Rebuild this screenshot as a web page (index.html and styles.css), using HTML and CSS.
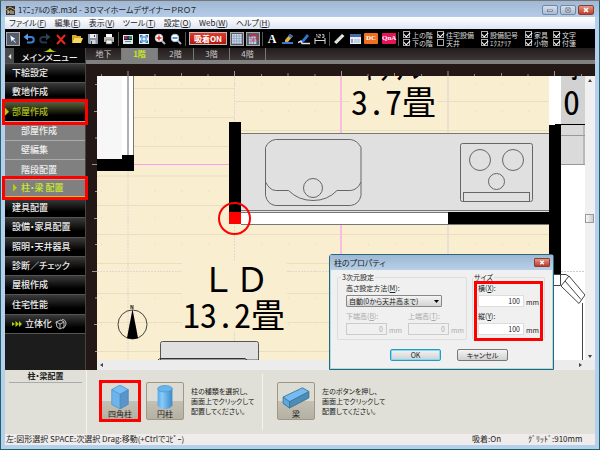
FILE: index.html
```html
<!DOCTYPE html>
<html lang="ja">
<head>
<meta charset="utf-8">
<title>1ﾏﾆｭｱﾙの家.m3d - ３ＤマイホームデザイナーＰＲＯ７</title>
<link rel="stylesheet" href="styles.css">
</head>
<body>
<div class="window">
  <header class="titlebar">
    <svg class="app-icon" viewBox="0 0 9 9"><rect width="9" height="9" fill="#3c3426"/><path d="M0 4l4-3 5 3" stroke="#b8a878" fill="none"/><path d="M1 5h2v2H1M4 5h2M4 7h2M7 5v3" stroke="#e8dcc0" fill="none"/></svg>
    <h1>1ﾏﾆｭｱﾙの家.m3d - ３ＤマイホームデザイナーＰＲＯ７</h1>
    <div class="win-buttons">
      <button aria-label="最小化"><svg viewBox="0 0 16 10"><rect x="5" y="5" width="6" height="2" fill="#fff" stroke="#556" stroke-width=".8"/></svg></button>
      <button aria-label="最大化"><svg viewBox="0 0 16 10"><rect x="5.500" y="2.500" width="5" height="5" fill="#fff" stroke="#556"/><rect x="7" y="4" width="2" height="2" fill="#556"/></svg></button>
      <button class="close" aria-label="閉じる"><svg viewBox="0 0 16 10"><path d="M5.500 2.500l5 5M10.500 2.500l-5 5" stroke="#fff" stroke-width="2"/></svg></button>
    </div>
  </header>

  <nav class="menubar">
    <button>ファイル(<u>F</u>)</button><button>編集(<u>E</u>)</button><button>表示(<u>V</u>)</button><button>ツール(<u>T</u>)</button><button>設定(<u>O</u>)</button><button>Web(<u>W</u>)</button><button>ヘルプ(<u>H</u>)</button>
  </nav>

  <div class="toolbar">
    <button class="tool framed" aria-label="選択"><svg viewBox="0 0 12 12"><path d="M2 1l8 5-3 .6L10 10 8.500 11 6 7.600 4 10z" fill="#fff" stroke="#2c4a80" stroke-width=".8"/></svg></button>
    <button class="tool" aria-label="元に戻す"><svg viewBox="0 0 12 12"><path d="M3 4h5a2.500 2.500 0 0 1 0 5.500H4" fill="none" stroke="#3f7fd0" stroke-width="2"/><path d="M5 .5v7L.5 4z" fill="#5a9be8"/></svg></button>
    <button class="tool" aria-label="やり直す"><svg viewBox="0 0 12 12"><path d="M9 4H4a2.500 2.500 0 0 0 0 5.500h4" fill="none" stroke="#23384a" stroke-width="2"/><path d="M7 .5v7L11.500 4z" fill="#2b4458"/></svg></button>
    <button class="tool" aria-label="削除"><svg viewBox="0 0 12 12"><path d="M2 2l8 9M10 2l-8 9" stroke="#e8281c" stroke-width="2"/></svg></button>
    <button class="tool" aria-label="開く"><svg viewBox="0 0 12 12"><path d="M1 2h4l1 1h4v2H3l-2 5z" fill="#d8a828"/><path d="M3 5h9l-2 5H1z" fill="#f8d860"/></svg></button>
    <button class="tool" aria-label="保存"><svg viewBox="0 0 12 12"><path d="M1 1h10v10H2l-1-1z" fill="#8c98a8"/><path d="M3 1h6v4H3z" fill="#e8edf4"/><path d="M3.500 7h5v4h-5z" fill="#d0d4dc"/><path d="M7 2h1v2H7zM4 8h1v3H4z" fill="#333c48"/></svg></button>
    <button class="tool" aria-label="印刷"><svg viewBox="0 0 12 12"><path d="M3 1h6v3H3z" fill="#fff"/><path d="M1 4h10v5H1z" fill="#b8b8b8"/><path d="M3 7h6v4H3z" fill="#f4f4f4" stroke="#555" stroke-width=".6"/></svg></button>
    <span class="sep"></span>
    <button class="tool" aria-label="パース"><svg viewBox="0 0 12 12"><rect x="1" y="2" width="10" height="9" fill="#dce8f0"/><path d="M2 3h3v4H2z" fill="#b02848"/><path d="M5 3h2v4H5z" fill="#283888"/><path d="M7 3h3v4H7z" fill="#2c8c50"/><path d="M2 6h8v1H2z" fill="#222"/><path d="M3 8h6v1H3z" fill="#688"/></svg></button>
    <button class="tool" aria-label="全体表示"><svg viewBox="0 0 12 12"><rect x="1" y="1" width="10" height="10" fill="#e8f2fc"/><path d="M2 2h3L2 5zM10 2v3L7 2zM2 10V7l3 3zM10 10H7l3-3z" fill="#2878c8"/><rect x="4" y="4" width="4" height="4" fill="none" stroke="#2878c8"/></svg></button>
    <button class="tool" aria-label="拡大"><svg viewBox="0 0 12 12"><path d="M7.500 7.500l3.500 3.500" stroke="#b8b8b8" stroke-width="2"/><circle cx="5" cy="5" r="3.800" fill="#fff" stroke="#d8c8c8"/><path d="M5 2.500v5M2.500 5h5" stroke="#d82828" stroke-width="1.400"/></svg></button>
    <button class="tool" aria-label="縮小"><svg viewBox="0 0 12 12"><path d="M7.500 7.500l3.500 3.500" stroke="#b8b8b8" stroke-width="2"/><circle cx="5" cy="5" r="3.800" fill="#fff" stroke="#a8c0d8"/><path d="M2.500 5h5" stroke="#2868b8" stroke-width="1.400"/></svg></button>
    <span class="sep"></span>
    <button class="snap">吸着ON</button>
    <button class="tool framed" aria-label="グリッド"><svg viewBox="0 0 12 12"><rect width="12" height="12" fill="#d4e0f0"/><path d="M2.500 0v12M5.500 0v12M8.500 0v12M0 2.500h12M0 5.500h12M0 8.500h12M11.500 0v12M0 11.500h12" stroke="#7b90b0" stroke-width=".8"/></svg></button>
    <button class="tool framed" aria-label="グリッド吸着"><svg viewBox="0 0 12 12"><path d="M1 3h9v9H1z" fill="#c8d0e4"/><path d="M1 5.500h9M1 8.500h9M3.500 3v9M6.500 3v9" stroke="#6878a0" stroke-width=".8"/><path d="M3 4V2q0-1 1-1h4q2 0 2 2v4" fill="none" stroke="#e02840" stroke-width="1.600"/><path d="M5 6h3v3H5z" fill="#e85068"/></svg></button>
    <span class="sep"></span>
    <button class="tool letter" aria-label="文字">A</button>
    <button class="tool" aria-label="線"><svg viewBox="0 0 12 12"><path d="M3 7l5-6 3 2-5 6-3 1z" fill="#e0b050"/><path d="M8 1l3 2-2 2-3-2z" fill="#2c6ac0"/><path d="M0 9h11v2H0z" fill="#3878d0"/></svg></button>
    <button class="tool" aria-label="多角形"><svg viewBox="0 0 12 12"><path d="M4 7l5-6 2 2-5 6-3 1z" fill="#2c78d0"/><path d="M0 9.500L3 8l1 2.500h8" fill="none" stroke="#dce4f0" stroke-width="1.400"/></svg></button>
    <button class="tool" aria-label="寸法"><svg viewBox="0 0 12 12"><path d="M1 11V5M11 11V5M1 7.500h10" stroke="#d8d8d8" fill="none"/><path d="M2 1.500h1v3M4.500 1.500h2v1.500h-2v1.500h2M8 1.500h2v3H8M8.500 3H10" stroke="#ddd" stroke-width=".7" fill="none"/></svg></button>
    <span class="sep"></span>
    <button class="tool" aria-label="計測"><svg viewBox="0 0 12 12"><path d="M1 9l8-8 2.500 2-8 8z" fill="#e8e8e4"/><path d="M3 7.500l1 1M5 5.500l1 1M7 3.500l1 1" stroke="#888" stroke-width=".7"/></svg></button>
    <button class="tool" aria-label="ウィンドウ"><svg viewBox="0 0 12 12"><rect x="1" y="1" width="11" height="10" fill="#e8eef8"/><path d="M1 1h11v3H1z" fill="#4868a8"/><path d="M2 6h2v4H2z" fill="#88a0c8"/><path d="M5 6h6v4H5z" fill="#c4d0e4"/></svg></button>
    <button class="tool badge dc">DC</button>
    <button class="tool badge qa">QnA</button>
    <span class="sep"></span>
    <div class="layers">
      <label><input type="checkbox" checked>上の階</label><label><input type="checkbox" checked>住宅設備</label><label><input type="checkbox" checked>設備記号</label><label><input type="checkbox" checked>家具</label><label><input type="checkbox" checked>文字</label>
      <label><input type="checkbox" checked>下の階</label><label><input type="checkbox">天井</label><label><input type="checkbox" checked>ｴｸｽﾃﾘｱ</label><label><input type="checkbox" checked>小物</label><label><input type="checkbox" checked>付箋</label>
    </div>
  </div>

  <div class="main">
    <aside class="sidebar">
      <div class="side-head">
        <button class="collapse" aria-label="たたむ"><svg viewBox="0 0 8 14"><path d="M5.500 5v5L3 7.500z" fill="#eee"/></svg></button>
        <h2><svg viewBox="0 0 14 4"><path d="M0 4q5-1 7-4 2 3 7 4z" fill="#b4cc10"/></svg>メインメニュー</h2>
      </div>
      <nav class="side-menu">
        <button>下絵設定</button>
        <button>敷地作成</button>
        <button class="open marked"><i class="arrow"></i>部屋作成</button>
        <button class="sub">部屋作成</button>
        <button class="sub">壁編集</button>
        <button class="sub">階段配置</button>
        <button class="sub current marked"><i class="arrow"></i>柱・梁 配置</button>
        <button>建具配置</button>
        <button>設備・家具配置</button>
        <button>照明・天井器具</button>
        <button>診断／チェック</button>
        <button>屋根作成</button>
        <button>住宅性能</button>
        <button class="solid"><svg class="chev" viewBox="0 0 10 6"><path d="M0 1l3 2-3 2zM3.500 0L7 3 3.500 6zM7 0l3 3-3 3z" fill="#b4cc10"/></svg>立体化<svg class="cube" viewBox="0 0 12 12"><path d="M1 4l5-2 3 2v5l-4 2-3-2zM5 6v5M1 4l4 2 4-2M7 1.500q4 0 4 4.500-.5 3-3 4.500" fill="none" stroke="#ccc" stroke-width=".9"/></svg></button>
      </nav>
    </aside>

    <section class="work">
      <div class="floors">
        <button>地下</button><button class="active">1階</button><button>2階</button><button>3階</button><button>4階</button>
      </div>
      <svg class="ruler-top" viewBox="86 64 510 12" preserveAspectRatio="xMinYMin slice">
        <path d="M128 71v5M234.500 71v5M341.500 71v5M448 71v5M554.500 71v5" stroke="#9a9490"/>
        <path d="M101.500 74v2M155 74v2M181.500 73v3M208 74v2M261.500 74v2M288 73v3M315 74v2M368 74v2M394.500 73v3M421.500 74v2M474.500 74v2M501.500 73v3M528 74v2M581.500 74v2" stroke="#8a8480"/>
      </svg>
      <svg class="ruler-left" viewBox="86 76 11 284" preserveAspectRatio="xMinYMin slice">
        <path d="M92 164.500h5M92 271.500h5" stroke="#9a9490"/>
        <path d="M95 84.500h2M94 111.500h3M95 138h2M95 191.500h2M94 218.500h3M95 244.500h2M95 298h2M94 324.500h3M95 351.500h2" stroke="#9a9490"/>
      </svg>
      <div class="plan">
        <svg viewBox="97 76 489 284" preserveAspectRatio="xMinYMin slice">
          <defs>
            <pattern id="dots" x="101" y="84" width="26.700" height="26.700" patternUnits="userSpaceOnUse"><rect width="1" height="1" fill="#dfd8c4"/></pattern>
          </defs>
          <rect x="97" y="76" width="489" height="284" fill="#faeed0"/>
          <path d="M134 88.500h100M134 117.500h100M134 146.500h100M234 101.500h315M241 130.500h308M97 176h132M97 205.500h132M97 234.500h452M97 263.500h452M97 293.500h452M97 322.500h452M97 351.500h452" stroke="#e9dec2"/>
          <rect x="97" y="76" width="489" height="284" fill="url(#dots)"/>
          <path d="M128 171v189M234.500 76v284M97 271.500h489" stroke="#dcd8d4" stroke-dasharray="2 1"/>
          <path d="M448 76v284" stroke="#e8e0d0" stroke-width="2"/>
          <path d="M341 76v284" stroke="#fabde0" stroke-width="2"/>
          <path d="M134 164.500h95" stroke="#f8a0e8"/>

          <rect x="97" y="76" width="25" height="83" fill="#f7f7f7"/>
          <rect x="122" y="76" width="12" height="80" fill="#fff"/>
          <path d="M128 76v80" stroke="#b0b0b0" stroke-width="2"/><path d="M133.500 76v80" stroke="#777"/>
          <path d="M97 159h25v-4h12v16H97z"/>

          <rect x="241" y="133" width="308" height="80" fill="#e0e0e0"/>
          <path d="M241 133.500h308M241 210.500h308M241 212.500h308" stroke="#777"/>
          <g fill="none" stroke="#666">
            <path d="M275.500 139.500h75q7 1 10.500 8v48q-2 9-10.500 10h-75q-8-1-10-10v-48q3-7 10-8z"/>
            <path d="M265.500 182q4 8 10 8.500h13q10 10 24.500 10t24-10h13.500q7-.5 10.500-8.500"/>
            <circle cx="313" cy="188" r="9.500" fill="#e0e0e0"/>
            <rect x="460.500" y="143.500" width="72" height="58" rx="2"/>
            <circle cx="480" cy="160" r="10.500"/><circle cx="513" cy="160" r="10.500"/><circle cx="496.500" cy="181.500" r="8"/>
            <rect x="463.500" y="192.500" width="66" height="9"/>
          </g>
          <rect x="241" y="213" width="207" height="11" fill="#fff"/>
          <path d="M241 224.500h308" stroke="#777"/>
          <rect x="448" y="212" width="101" height="12"/>
          <rect x="229" y="122" width="12" height="91"/>
          <rect x="229" y="212" width="12" height="12" fill="#f00"/>
          <circle cx="234.500" cy="218.500" r="15.500" fill="none" stroke="#f00" stroke-width="2"/>

          <rect x="549" y="76" width="37" height="284" fill="#fff"/>
          <rect x="561" y="76" width="25" height="48" fill="#d2d2d2"/>
          <rect x="561" y="125" width="25" height="40" fill="#dadada"/>
          <path d="M555 124.500h31" stroke="#000"/>
          <path d="M561 135.500h25M584 125v40M561 164.500h25" stroke="#999"/>
          <path d="M561 271.500h25" stroke="#ccc" stroke-dasharray="2 1"/>
          <rect x="549" y="125" width="12" height="150"/>
          <g fill="none" stroke="#444">
            <path d="M549.500 274.500h11v11h-11M561 286l8-10 16 19-6 8.500zM565 281l16 18.500M561 274.500h5l3 2M582.500 303v57"/>
          </g>

          <rect x="350" y="76" width="87" height="44" fill="#faeed0"/>
          <rect x="182" y="262" width="105" height="70" fill="#faeed0"/>
          <g class="room">
            <text x="360" y="79">ｷｯﾁﾝ</text><text x="351" y="115">3.7畳</text>
            <text x="567" y="79">ﾎ</text><text x="563" y="115">0.</text>
            <text x="183" y="328">13.2畳</text>
          </g>
          <text class="room-name" x="201" y="292">ＬＤ</text>

          <circle cx="132.500" cy="324.500" r="14.500" fill="none" stroke="#444"/>
          <path d="M132.500 309l5.500 29q-5 2-11 0z"/>
          <text class="north" x="130" y="309">N</text>
          <path d="M160.500 360v-16.500q0-2 2-2h94q2 0 2 2V360z" fill="#e0e0e0" stroke="#555"/>
          <path d="M158 360q1-1.500 4-1.500h82q2 0 3 1.500" fill="none" stroke="#333"/>
        </svg>
      </div>
      <div class="scroll-v"><svg viewBox="0 0 10 8"><path d="M3 6h4L5 3z" fill="#444"/></svg><span class="thumb"></span><svg viewBox="0 0 10 8"><path d="M3 3h4L5 6z" fill="#444"/></svg></div>
      <div class="scroll-h"><svg viewBox="0 0 10 8"><path d="M6 2v4L3 4z" fill="#444"/></svg><svg viewBox="0 0 10 8"><path d="M4 2v4l3-2z" fill="#444"/></svg></div>
    </section>
  </div>

  <div class="parts">
    <div class="parts-name"><h3>柱・梁配置</h3></div>
    <div class="group">
      <button class="part marked"><svg viewBox="0 0 24 26"><path d="M12 0l9 5v16l-9 5-9-5V5z" fill="#6cb4ea"/><path d="M12 0l9 5-9 5-9-5z" fill="#78c0f4"/><path d="M21 5v16l-9 5V10z" fill="#5a94c8"/><path d="M12 0l9 5v16l-9 5-9-5V5zM3 5l9 5 9-5M12 10v16" fill="none" stroke="#3c84bc" stroke-width=".6"/></svg>四角柱</button>
      <button class="part"><svg viewBox="0 0 24 26"><defs><linearGradient id="cyl"><stop stop-color="#58a8e4"/><stop offset=".3" stop-color="#88ccfa"/><stop offset="1" stop-color="#3c88c8"/></linearGradient></defs><path d="M4 4v18q2 4 8 4t8-4V4z" fill="url(#cyl)"/><ellipse cx="12" cy="4" rx="8" ry="3.500" fill="#68b4ec" stroke="#3c88c0" stroke-width=".6"/></svg>円柱</button>
      <p>柱の種類を選択し、<br>画面上でクリックして<br>配置してください。</p>
    </div>
    <div class="group">
      <button class="part"><svg class="beam" viewBox="0 0 30 26"><path d="M1 13L22 3l7 4v7L8 25l-7-5z" fill="#4c8cb8"/><path d="M1 13L22 3l7 4L8 18z" fill="#74bcf0"/><path d="M1 13l7 5v7l-7-5z" fill="#5aa8e0"/><path d="M1 13L22 3l7 4v7L8 25l-7-5zM1 13l7 5 21-11M8 18v7" fill="none" stroke="#30627c" stroke-width=".7"/></svg>梁</button>
      <p>左のボタンを押し、<br>画面上でクリックして<br>配置してください。</p>
    </div>
  </div>

  <footer class="status">
    <span class="hint">左:図形選択 SPACE:次選択 Drag:移動(+Ctrlでｺﾋﾟｰ)</span>
    <span class="snap-state">吸着:On</span>
    <span class="grid-state">ｸﾞﾘｯﾄﾞ:910mm</span>
  </footer>

  <form class="dialog">
    <header><h2>柱のプロパティ</h2><button type="button" class="close" aria-label="閉じる"><svg viewBox="0 0 16 10"><path d="M5.500 2.500l5 5M10.500 2.500l-5 5" stroke="#fff" stroke-width="2"/></svg></button></header>
    <div class="dialog-body">
      <fieldset class="height-set">
        <legend>3次元設定</legend>
        <label for="mode">高さ設定方法(<u>M</u>):</label>
        <div class="select"><select id="mode"><option>自動(0から天井高まで)</option></select></div>
        <div class="pair">
          <div><label for="low">下端高(<u>B</u>):</label><span class="field"><input id="low" value="0" disabled>mm</span></div>
          <div><label for="high">上端高(<u>T</u>):</label><span class="field"><input id="high" value="0" disabled>mm</span></div>
        </div>
      </fieldset>
      <fieldset class="size-set marked">
        <legend>サイズ</legend>
        <label for="sx">横(<u>X</u>):</label><span class="field"><input id="sx" value="100">mm</span>
        <label for="sy">縦(<u>Y</u>):</label><span class="field"><input id="sy" value="100">mm</span>
      </fieldset>
      <div class="actions"><button type="button" class="default">OK</button><button type="button">キャンセル</button></div>
    </div>
  </form>
</div>
</body>
</html>
```
FILE: styles.css
```css
* { box-sizing: border-box; }
body {
  margin: 0;
  font: 8px/12px "Noto Sans CJK JP", "Liberation Sans", sans-serif;
  font-feature-settings: "palt";
  color: #222;
}
button, input, select { font: inherit; font-feature-settings: inherit; color: inherit; margin: 0; padding: 0; border: 0; background: none; }
h1, h2, h3, p { margin: 0; font-size: inherit; font-weight: 400; }
svg { display: block; }

.window {
  position: relative;
  display: flex;
  flex-direction: column;
  height: 100vh;
  min-height: 450px;
  padding: 0 4px 4px;
  border: 1px solid #24606c;
  border-top-color: #777;
  background: #b4d0ec;
  overflow: hidden;
}

/* Title bar */
.titlebar {
  display: flex;
  align-items: center;
  height: 16px;
  margin: 0 -4px;
  padding: 2px 5px 0;
  background: linear-gradient(#a0b8d4, #b4cce8);
  white-space: nowrap;
}
.app-icon { width: 9px; height: 9px; margin-right: 3px; }
.titlebar h1 { flex: 1; }
.win-buttons { display: flex; gap: 2px; }
.win-buttons button { width: 16px; height: 10px; border: 1px solid #7088a4; border-radius: 2px; background: linear-gradient(#d4e0ee, #a8bcd4); }
.win-buttons svg, .dialog header svg { width: 100%; height: 100%; }
.win-buttons .close, .dialog .close { border-color: #8c3c34; background: linear-gradient(#e09888, #c03c28); }

/* Menu bar */
.menubar { display: flex; gap: 8px; height: 12px; padding: 0 4px; background: linear-gradient(#fff, #dfe4f4); }
.menubar button { line-height: 12px; white-space: nowrap; }

/* Toolbar */
.toolbar { display: flex; align-items: center; height: 19px; background: #000; color: #ddd; white-space: nowrap; }
.tool { flex: none; width: 16px; height: 16px; padding: 2px; }
.tool svg { width: 100%; height: 100%; }
.framed { width: 14px; height: 14px; margin: 0 1px; padding: 1px; border: 1px solid #aaa; background: #585c68; }
.sep { flex: none; width: 1px; height: 14px; margin: 0 1px; background: #555; }
.snap { width: 38px; height: 13px; margin: 0 2px; border: 1px solid #bbb; background: linear-gradient(#e43828, #b01810); color: #fff; font-weight: 700; line-height: 10px; }
.letter { padding: 0; color: #fff; font: 700 12px/14px "Liberation Serif", serif; }
.badge { height: 11px; width: 14px; margin: 0 1px; padding: 0; color: #fff; font: 700 7px/11px "Liberation Serif", serif; border-radius: 1px; }
.dc { background: #f07020; }
.qa { margin-left: 3px; background: #e81458; }
.layers { display: grid; grid-template-columns: 34px 44px 44px 28px 30px; margin-left: 3px; font-size: 7px; line-height: 8px; }
.layers label { display: flex; align-items: center; gap: 2px; height: 8px; }
.layers input { appearance: none; flex: none; width: 7px; height: 7px; border: 1px solid #aaa; }
.layers input:checked::before { content: ""; display: block; width: 5px; height: 3px; border: solid #fff; border-width: 0 0 1px 1px; transform: rotate(-45deg); }

/* Main area */
.main { flex: 1; display: flex; min-height: 0; }
.sidebar { flex: none; width: 81px; border-right: 1px solid #444; background: #1c1c1c; color: #eee; font-size: 9px; }
.side-head { display: flex; height: 15px; }
.collapse { width: 9px; background: #4a4a4a; }
.side-head h2 { flex: 1; background: #080808; text-align: center; font-weight: 500; line-height: 11px; }
.side-head h2 svg { width: 14px; height: 4px; margin: 0 auto; }
.side-menu { display: grid; grid-auto-rows: 1fr; height: 271px; border-bottom: 1px solid #555; }
.side-menu button {
  position: relative;
  display: flex;
  align-items: center;
  min-height: 0;
  padding: 0 7px;
  border-top: 1px solid #555;
  background: linear-gradient(#3a3a3a, #000 70%);
  font-weight: 500;
  line-height: 16px;
  white-space: nowrap;
}
.side-menu .sub { padding-left: 16px; border-color: #aaa; background: #808080; }
.side-menu .open { background: linear-gradient(#545c30, #000 70%); color: #a8bc18; }
.side-menu .current { color: #cce828; border-bottom: 2px solid #b8d020; }
.arrow { position: absolute; left: 0; width: 4px; height: 8px; background: #b4cc10; clip-path: polygon(0 0, 100% 50%, 0 100%); }
.current .arrow { left: 8px; }
.marked::after { content: ""; position: absolute; inset: -3px; border: 3px solid #f00; pointer-events: none; }
.side-menu .marked { z-index: 1; }
.side-menu .marked::after { inset: -4px -3px; }
.side-menu .solid { gap: 3px; }
.chev { width: 10px; height: 6px; }
.cube { width: 12px; height: 12px; }

.work {
  flex: 1;
  display: grid;
  grid-template: 16px 12px minmax(0, 1fr) 10px / 11px minmax(0, 1fr) 10px;
  min-width: 0;
  background: #231815;
}
.floors { grid-column: 1 / -1; display: flex; border-bottom: 4px solid #808080; background: linear-gradient(#231c1c, #3c3636); }
.floors button { width: 36px; border-right: 1px solid #777; color: #ccc; line-height: 12px; }
.floors .active { background: #808080; color: #c8e820; font-weight: 700; }
.ruler-top { grid-column: 1 / -1; width: 100%; height: 12px; }
.ruler-left { width: 11px; height: 100%; }
.plan { position: relative; overflow: hidden; }
.plan svg { position: absolute; width: 100%; height: 100%; }
.room, .room-name { font-size: 34px; fill: #000; }
.room { font-feature-settings: "hwid"; }
.room-name { font-feature-settings: normal; }
.north { font-size: 5px; font-weight: 700; }
.scroll-v { display: flex; flex-direction: column; justify-content: space-between; background: #f0f0f0; }
.scroll-v svg, .scroll-h svg { width: 10px; height: 8px; }
.thumb { width: 9px; height: 9px; border: 1px solid #999; background: linear-gradient(90deg, #f8f8f8, #ccc); }
.scroll-h { grid-column: 2 / -1; display: flex; align-items: center; justify-content: space-between; padding-right: 10px; background: #ececec; }

/* Parts panel */
.parts { display: flex; height: 64px; background: #e0e0d8; }
.parts-name { width: 82px; padding: 0 4px; border-right: 1px solid #f4f4f0; }
.parts-name h3 { border-bottom: 1px solid #aaa; text-align: center; font-weight: 700; }
.group { display: flex; gap: 7px; width: 175px; margin: 4px 0; padding: 8px 0 0 14px; }
.group + .group { border-left: 1px solid #f4f4f0; }
.part {
  position: relative;
  flex: none;
  display: flex;
  flex-direction: column;
  align-items: center;
  width: 38px;
  height: 38px;
  padding-top: 2px;
  border: 1px solid #a09880;
  border-radius: 2px;
  background: linear-gradient(#dcdcd4 50%, #c4c0b4 50%, #b4b0a4);
  line-height: 9px;
}
.part svg { width: 24px; height: 24px; }
.part .beam { width: 30px; }
.group p { font-size: 7px; line-height: 10px; padding-top: 4px; white-space: nowrap; }

/* Status bar */
.status { display: flex; height: 11px; padding: 0 1px; background: #f0eceb; line-height: 10px; white-space: nowrap; }
.hint { flex: 1; }
.snap-state { width: 56px; }
.grid-state { width: 66px; }

/* Dialog */
.dialog {
  position: absolute;
  left: 328px;
  top: 253px;
  width: 225px;
  border: 1px solid #2c6478;
  border-radius: 3px 3px 0 0;
  background: #f0f0f0;
  font-size: 7px;
  line-height: 9px;
  box-shadow: inset 0 0 0 1px #a8dce8;
}
.dialog header { display: flex; align-items: center; height: 15px; padding: 0 3px 0 4px; background: linear-gradient(#9cb8d4, #b8d0e8); font-size: 8px; }
.dialog header h2 { flex: 1; }
.dialog .close { width: 16px; height: 9px; border: 1px solid #8c3c34; border-radius: 1px; }
.dialog-body { display: grid; grid-template-columns: 130px 73px; gap: 9px 5px; padding: 3px 7px 8px; }
fieldset { position: relative; min-width: 0; margin: 0; padding: 2px 0 4px 8px; border: 1px solid #ddd; border-radius: 2px; }
legend { margin-left: -5px; padding: 0 1px; line-height: 9px; }
.dialog label { display: block; height: 9px; white-space: nowrap; }
.select { position: relative; width: 96px; margin: 2px 0 5px; }
.select::after { content: ""; position: absolute; right: 3px; top: 5px; width: 5px; height: 3px; background: #000; clip-path: polygon(0 0, 100% 0, 50% 100%); }
.select select { appearance: none; display: block; width: 100%; height: 12px; padding: 0 2px; border: 1px solid #888; border-radius: 1px; background: linear-gradient(#f4f4f4, #d4d4d4); line-height: 9px; }
.pair { display: grid; grid-template-columns: 62px 1fr; color: #aaa; }
.field { display: flex; align-items: end; gap: 2px; margin-top: 2px; }
.field input { width: 41px; height: 12px; padding: 0 3px; border: 1px solid #ccc; text-align: right; line-height: 10px; }
.size-set { padding-left: 5px; }
.size-set .field { margin-bottom: 5px; }
.size-set .field input { width: 46px; background: #fff; border-color: #ddd; }
.size-set .field:last-child { margin-bottom: 0; }
.size-set.marked::after { inset: -1px 1px -2px; }
.actions { grid-column: 1 / -1; display: flex; gap: 16px; padding-left: 53px; }
.actions button { width: 51px; height: 12px; border: 1px solid #777; border-radius: 2px; background: linear-gradient(#f4f4f4, #d0d0d0); line-height: 10px; }
.actions .default { border: 1px solid #2c98c0; box-shadow: inset 0 0 0 1px #7cdcf4; }
```
